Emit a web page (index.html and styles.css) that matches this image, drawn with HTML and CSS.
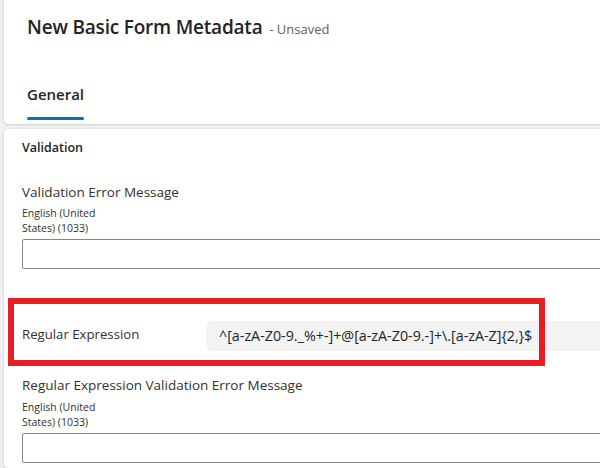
FILE: index.html
```html
<!DOCTYPE html>
<html>
<head>
<meta charset="utf-8">
<link rel="stylesheet" href="styles.css">
</head>
<body>
<div class="page">
  <header class="header-card">
    <h1 class="title">New Basic Form Metadata <span class="status">- Unsaved</span></h1>
    <nav class="tabs">
      <span class="tab active">General</span>
    </nav>
  </header>
  <section class="form-card">
    <h2 class="section-title">Validation</h2>
    <div class="field">
      <div class="field-label">Validation Error Message</div>
      <div class="lang">English (United<br>States) (1033)</div>
      <div class="text-input"></div>
    </div>
    <div class="row">
      <div class="row-label">Regular Expression</div>
      <div class="readonly">^[a-zA-Z0-9._%+-]+@[a-zA-Z0-9.-]+\.[a-zA-Z]{2,}$</div>
      <div class="highlight"></div>
    </div>
    <div class="field second">
      <div class="field-label">Regular Expression Validation Error Message</div>
      <div class="lang">English (United<br>States) (1033)</div>
      <div class="text-input"></div>
    </div>
  </section>
</div>
</body>
</html>
```

FILE: styles.css
```css
html, body {
  margin: 0;
  padding: 0;
  background: #f0f0f0;
  overflow: hidden;
}
body {
  font-family: "Segoe UI", "Open Sans", "Noto Sans", sans-serif;
  color: #242424;
  width: 600px;
  height: 468px;
}
.page {
  padding-left: 4px;
  display: flex;
  flex-direction: column;
  gap: 5px;
}
.header-card {
  background: #fff;
  margin-top: -8px;
  margin-right: -20px;
  height: 132px;
  border-radius: 4px;
  box-shadow: 0 0 2px rgba(0,0,0,0.12), 0 1px 2px rgba(0,0,0,0.10);
  padding-left: 23px;
  box-sizing: border-box;
  display: flex;
  flex-direction: column;
}
.title {
  margin: 0;
  padding-top: 22px;
  font-size: 19px;
  font-weight: 600;
  line-height: 26px;
  color: #242424;
  letter-spacing: -0.2px;
}
.status {
  font-size: 13px;
  font-weight: 400;
  color: #616161;
  letter-spacing: 0;
  margin-left: 2px;
}
.tabs {
  margin-top: 42px;
  display: flex;
}
.tab {
  font-size: 15px;
  font-weight: 600;
  line-height: 20px;
  color: #242424;
  padding-bottom: 16px;
  position: relative;
}
.tab.active::after {
  content: "";
  position: absolute;
  left: 0;
  right: 0;
  bottom: 0;
  height: 3px;
  border-radius: 2px;
  background: #0f6cbd;
}
.form-card {
  background: #fff;
  margin-right: -20px;
  border-radius: 4px;
  box-shadow: 0 0 2px rgba(0,0,0,0.12), 0 1px 2px rgba(0,0,0,0.10);
  padding: 9px 0 0 18px;
  height: 330px;
}
.section-title {
  margin: 0;
  font-size: 12.5px;
  font-weight: 600;
  line-height: 20px;
  color: #242424;
}
.field {
  margin-top: 24px;
}
.field-label {
  font-size: 13.5px;
  line-height: 20px;
  color: #323130;
}
.lang {
  margin-top: 4px;
  font-size: 10.5px;
  line-height: 15px;
  color: #323130;
}
.text-input {
  margin-top: 3px;
  height: 28px;
  border: 1px solid #8a8886;
  border-radius: 2px;
}
.row {
  position: relative;
  margin-top: 52px;
  display: flex;
  align-items: center;
}
.row-label {
  width: 184px;
  font-size: 13.2px;
  line-height: 20px;
  color: #323130;
  margin-top: -4px;
}
.readonly {
  flex: 1;
  height: 30px;
  background: #f3f3f3;
  border-radius: 4px;
  padding-left: 13px;
  font-size: 14.3px;
  line-height: 30px;
  color: #242424;
  white-space: nowrap;
}
.highlight {
  position: absolute;
  left: -14px;
  top: -23px;
  width: 525px;
  height: 56px;
  border: 6px solid #e81c22;
  pointer-events: none;
}
.field.second {
  margin-top: 24px;
}
.field.second .lang {
  margin-top: 5px;
}
```
